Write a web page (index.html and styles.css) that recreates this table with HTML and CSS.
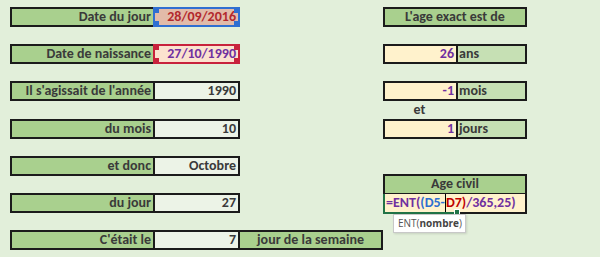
FILE: index.html
```html
<!DOCTYPE html>
<html lang="fr">
<head>
    <meta charset="UTF-8">
    <meta name="viewport" content="width=device-width, initial-scale=1.0">
    <title>Calcul de l'âge</title>
    <link rel="stylesheet" href="styles.css">
</head>
<body>

    <div class="sheet">
        <!-- Colonne de gauche : dates -->
        <div class="box pair left r1">
            <div class="cell label">Date du jour</div>
            <div class="cell value date-today ref ref-blue">28/09/2016</div>
        </div>
        <div class="box pair left r3">
            <div class="cell label">Date de naissance</div>
            <div class="cell value date-birth ref ref-red">27/10/1990</div>
        </div>
        <div class="box pair left r5">
            <div class="cell label">Il s'agissait de l'année</div>
            <div class="cell value">1990</div>
        </div>
        <div class="box pair left r7">
            <div class="cell label">du mois</div>
            <div class="cell value">10</div>
        </div>
        <div class="box pair left r9">
            <div class="cell label">et donc</div>
            <div class="cell value">Octobre</div>
        </div>
        <div class="box pair left r11">
            <div class="cell label">du jour</div>
            <div class="cell value">27</div>
        </div>
        <div class="box triple wide r13">
            <div class="cell label">C'était le</div>
            <div class="cell value">7</div>
            <div class="cell label center">jour de la semaine</div>
        </div>

        <!-- Colonne de droite : résultat -->
        <div class="box right r1">
            <div class="cell label center">L'age exact est de</div>
        </div>
        <div class="box unit right r3">
            <div class="cell result">26</div>
            <div class="cell unit-name">ans</div>
        </div>
        <div class="box unit right r5">
            <div class="cell result">-1</div>
            <div class="cell unit-name">mois</div>
        </div>
        <div class="and r6">et</div>
        <div class="box unit right r7">
            <div class="cell result">1</div>
            <div class="cell unit-name">jours</div>
        </div>

        <div class="box civil right r10">
            <div class="cell label center">Age civil</div>
            <div class="cell formula">
                <span class="f-purple">=ENT(</span><span class="f-blue">(D5-</span><span class="caret"></span><span class="f-red">D7)</span><span class="f-purple">/365,25)</span>
                <span class="active"></span>
            </div>
        </div>

        <div class="tooltip">ENT(<b>nombre</b>)</div>
    </div>

</body>
</html>
```

FILE: styles.css
```css
body {
    margin: 0;
    padding: 0;
    background-color: #e2efda;
    font-family: Carlito, Lato, "Liberation Sans", sans-serif;
    font-weight: bold;
    font-size: 14px;
    color: #3a3a3a;
}

.sheet {
    position: relative;
    display: grid;
    grid-template-columns: 10px 143px 87px 143px 73px 71px;
    grid-template-rows: repeat(13, 18.6px);
    padding-top: 7px;
    height: 250px;
}

/* lignes de la feuille */
.r1 { grid-row: 1; }
.r3 { grid-row: 3; }
.r5 { grid-row: 5; }
.r6 { grid-row: 6; }
.r7 { grid-row: 7; }
.r9 { grid-row: 9; }
.r10 { grid-row: 10 / 12; }
.r11 { grid-row: 11; }
.r13 { grid-row: 13; }

.left { grid-column: 2 / 4; }
.right { grid-column: 5 / 7; }
.wide { grid-column: 2 / 5; }

.box {
    display: grid;
    box-sizing: border-box;
    border: 2px solid #1b1b1b;
    margin-bottom: -1.4px;
    background-color: #a9d08e;
}

.pair { grid-template-columns: 141px 1fr; }
.triple { grid-template-columns: 141px 85px 1fr; }
.unit { grid-template-columns: 71px 1fr; }
.civil { grid-template-rows: 1fr 1fr; margin-bottom: -2px; }

.cell {
    position: relative;
    display: flex;
    align-items: center;
    white-space: nowrap;
    padding: 0 2px;
    line-height: 1;
}

.label {
    justify-content: flex-end;
    background-color: #a9d08e;
}

.center { justify-content: center; }

.value {
    justify-content: flex-end;
    border-left: 2px solid #1b1b1b;
    background-color: #ecf3e7;
}

.triple .label.center { border-left: 2px solid #1b1b1b; }

.date-today {
    background-color: #e2bba9;
    color: #b3282d;
}

.date-birth {
    background-color: #fbe2cf;
    color: #7030a0;
}

/* cadres de référence des cellules D5 et D7 */
.ref::after {
    content: "";
    position: absolute;
    top: -3px;
    left: -3px;
    right: -3px;
    bottom: -3px;
    border: 2px solid var(--ref);
    box-sizing: border-box;
    margin: 1px;
    background:
        linear-gradient(var(--ref), var(--ref)) top left / 4px 4px no-repeat,
        linear-gradient(var(--ref), var(--ref)) top right / 4px 4px no-repeat,
        linear-gradient(var(--ref), var(--ref)) bottom left / 4px 4px no-repeat,
        linear-gradient(var(--ref), var(--ref)) bottom right / 4px 4px no-repeat;
}

.ref-blue { --ref: #2f6fd1; }
.ref-red { --ref: #c8223c; }

.result {
    justify-content: flex-end;
    background-color: #fff2cc;
    color: #7030a0;
}

.unit-name {
    border-left: 2px solid #1b1b1b;
    background-color: #c6e0b4;
    padding-left: 1px;
}

.and {
    grid-column: 5 / 6;
    display: flex;
    align-items: center;
    justify-content: center;
}

.civil .label { border-bottom: 1px solid #1b1b1b; }

.formula {
    background-color: #fff2cc;
    padding-left: 1px;
}

.f-purple { color: #7030a0; }
.f-blue { color: #2f6fd1; }
.f-red { color: #c00000; }

.caret {
    display: inline-block;
    width: 0;
    height: 18px;
    border-left: 1px solid #000;
}

/* cellule active */
.active {
    position: absolute;
    left: -2px;
    top: 0;
    width: 72px;
    bottom: -2px;
    border-left: 2px solid #217346;
    border-bottom: 2px solid #217346;
}

.active::after {
    content: "";
    position: absolute;
    right: -3px;
    bottom: -3px;
    width: 4px;
    height: 4px;
    background-color: #217346;
    border: 1px solid #fff;
}

.tooltip {
    position: absolute;
    left: 393px;
    top: 214px;
    padding: 1px 3px 2px 4px;
    background-color: #fff;
    border: 1px solid #c8c8c8;
    box-shadow: 1px 1px 2px rgba(0, 0, 0, 0.12);
    font-family: "Open Sans", "Noto Sans", sans-serif;
    font-weight: normal;
    font-size: 10px;
    color: #555;
}

.tooltip b { color: #444; }
```
